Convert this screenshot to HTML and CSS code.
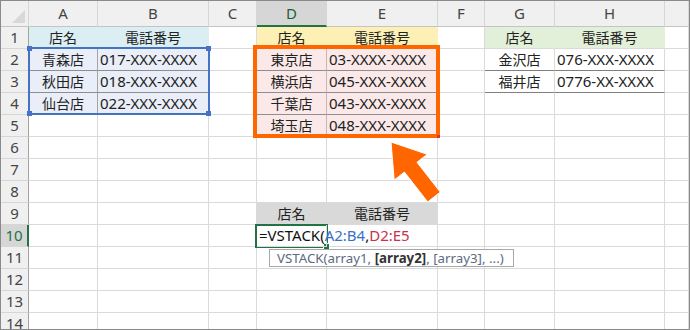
FILE: index.html
```html
<!DOCTYPE html>
<html lang="ja">

<head>
    <meta charset="UTF-8">
    <meta name="viewport" content="width=device-width, initial-scale=1.0">
    <title>VSTACK</title>
    <link rel="stylesheet" href="styles.css">
</head>

<body>
    <div class="sheet">
        <!-- 列見出し -->
        <div class="row head">
            <div class="corner"><span class="tri"></span></div>
            <div class="ch">A</div>
            <div class="ch">B</div>
            <div class="ch">C</div>
            <div class="ch sel">D</div>
            <div class="ch">E</div>
            <div class="ch">F</div>
            <div class="ch">G</div>
            <div class="ch">H</div>
            <div class="ch"></div>
        </div>

        <div class="row">
            <div class="rh">1</div>
            <div class="c t1h mid">店名</div>
            <div class="c t1h mid">電話番号</div>
            <div class="c"></div>
            <div class="c t2h mid">店名</div>
            <div class="c t2h mid">電話番号</div>
            <div class="c"></div>
            <div class="c t3h mid">店名</div>
            <div class="c t3h mid">電話番号</div>
            <div class="c"></div>
        </div>
        <div class="row">
            <div class="rh">2</div>
            <div class="c t1 mid">青森店</div>
            <div class="c t1">017-XXX-XXXX</div>
            <div class="c"></div>
            <div class="c t2 mid">東京店</div>
            <div class="c t2">03-XXXX-XXXX</div>
            <div class="c"></div>
            <div class="c t3 mid">金沢店</div>
            <div class="c t3">076-XXX-XXXX</div>
            <div class="c"></div>
        </div>
        <div class="row">
            <div class="rh">3</div>
            <div class="c t1 mid">秋田店</div>
            <div class="c t1">018-XXX-XXXX</div>
            <div class="c"></div>
            <div class="c t2 mid">横浜店</div>
            <div class="c t2">045-XXX-XXXX</div>
            <div class="c"></div>
            <div class="c t3 mid">福井店</div>
            <div class="c t3">0776-XX-XXXX</div>
            <div class="c"></div>
        </div>
        <div class="row">
            <div class="rh">4</div>
            <div class="c t1 mid">仙台店</div>
            <div class="c t1">022-XXX-XXXX</div>
            <div class="c"></div>
            <div class="c t2 mid">千葉店</div>
            <div class="c t2">043-XXX-XXXX</div>
            <div class="c"></div>
            <div class="c"></div>
            <div class="c"></div>
            <div class="c"></div>
        </div>
        <div class="row">
            <div class="rh">5</div>
            <div class="c"></div>
            <div class="c"></div>
            <div class="c"></div>
            <div class="c t2 mid">埼玉店</div>
            <div class="c t2">048-XXX-XXXX</div>
            <div class="c"></div>
            <div class="c"></div>
            <div class="c"></div>
            <div class="c"></div>
        </div>
        <div class="row">
            <div class="rh">6</div>
            <div class="c"></div><div class="c"></div><div class="c"></div><div class="c"></div><div class="c"></div>
            <div class="c"></div><div class="c"></div><div class="c"></div><div class="c"></div>
        </div>
        <div class="row">
            <div class="rh">7</div>
            <div class="c"></div><div class="c"></div><div class="c"></div><div class="c"></div><div class="c"></div>
            <div class="c"></div><div class="c"></div><div class="c"></div><div class="c"></div>
        </div>
        <div class="row">
            <div class="rh">8</div>
            <div class="c"></div><div class="c"></div><div class="c"></div><div class="c"></div><div class="c"></div>
            <div class="c"></div><div class="c"></div><div class="c"></div><div class="c"></div>
        </div>
        <div class="row">
            <div class="rh">9</div>
            <div class="c"></div>
            <div class="c"></div>
            <div class="c"></div>
            <div class="c spill mid">店名</div>
            <div class="c spill mid">電話番号</div>
            <div class="c"></div>
            <div class="c"></div>
            <div class="c"></div>
            <div class="c"></div>
        </div>
        <div class="row">
            <div class="rh sel">10</div>
            <div class="c"></div>
            <div class="c"></div>
            <div class="c"></div>
            <div class="c formula">=VSTACK(<span class="ref1">A2:B4</span>,<span class="ref2">D2:E5</span><span class="caret"></span></div>
            <div class="c"></div>
            <div class="c"></div>
            <div class="c"></div>
            <div class="c"></div>
            <div class="c"></div>
        </div>
        <div class="row">
            <div class="rh">11</div>
            <div class="c"></div><div class="c"></div><div class="c"></div><div class="c"></div><div class="c"></div>
            <div class="c"></div><div class="c"></div><div class="c"></div><div class="c"></div>
        </div>
        <div class="row">
            <div class="rh">12</div>
            <div class="c"></div><div class="c"></div><div class="c"></div><div class="c"></div><div class="c"></div>
            <div class="c"></div><div class="c"></div><div class="c"></div><div class="c"></div>
        </div>
        <div class="row">
            <div class="rh">13</div>
            <div class="c"></div><div class="c"></div><div class="c"></div><div class="c"></div><div class="c"></div>
            <div class="c"></div><div class="c"></div><div class="c"></div><div class="c"></div>
        </div>
        <div class="row">
            <div class="rh">14</div>
            <div class="c"></div><div class="c"></div><div class="c"></div><div class="c"></div><div class="c"></div>
            <div class="c"></div><div class="c"></div><div class="c"></div><div class="c"></div>
        </div>

        <!-- 参照範囲の枠 -->
        <div class="ref-box">
            <span class="knob k1"></span>
            <span class="knob k2"></span>
            <span class="knob k3"></span>
            <span class="knob k4"></span>
        </div>
        <div class="orange-box"><span class="red-knob"></span></div>
        <div class="active-cell"><span class="fill-knob"></span></div>

        <svg class="arrow" width="690" height="330" viewBox="0 0 690 330">
            <polygon points="391,142 427.3,154.3 417,162.3 440.3,192.1 427.7,201.9 404.4,172.1 394.2,180.1"
                fill="#ff6600" stroke="#ffffff" stroke-width="1" stroke-linejoin="round" />
        </svg>

        <div class="tip">VSTACK(array1, <b>[array2]</b>, [array3], ...)</div>
    </div>
</body>

</html>
```

FILE: styles.css
```css
/* シート全体 */
body {
    margin: 0;
    background: #fff;
    font-family: "Noto Sans", "Noto Sans CJK JP", sans-serif;
    font-size: 15px;
    color: #222;
}

.sheet {
    position: relative;
    width: 690px;
    height: 330px;
    box-sizing: border-box;
    border: 1px solid #8a8a8a;
    overflow: hidden;
    background: #fff;
}

.row {
    display: grid;
    grid-template-columns: 28px 69px 111px 48px 70px 111px 47px 70px 110px 1fr;
    height: 22px;
}

.row.head {
    height: 26px;
}

.row > div {
    box-sizing: border-box;
    border-right: 1px solid #dadada;
    border-bottom: 1px solid #dadada;
    display: flex;
    align-items: center;
    white-space: nowrap;
    line-height: 1;
}

/* 見出し */
.head > div {
    background: #f0f0f0;
    border-right-color: #d6d6d6;
    border-bottom-color: #c4c4c4;
    justify-content: center;
    color: #444;
}

.corner {
    position: relative;
}

.corner .tri {
    position: absolute;
    right: 3px;
    bottom: 3px;
    width: 0;
    height: 0;
    border-left: 13px solid transparent;
    border-bottom: 13px solid #d8d8d8;
}

.head .ch.sel {
    background: #d6d6d6;
    border-bottom: 2px solid #217346;
    color: #1d5e39;
}

.row .rh {
    background: #f0f0f0;
    border-right-color: #a3a3a3;
    border-bottom-color: #d6d6d6;
    justify-content: center;
    color: #444;
}

.row .rh.sel {
    background: #d6d6d6;
    border-right: 2px solid #217346;
    color: #217346;
}

/* セル */
.row .c {
    padding-left: 2px;
}

.row .mid {
    justify-content: center;
    padding-left: 0;
    font-size: 14px;
}

.row .t1h {
    background: #daeef3;
    border-right-color: #daeef3;
}

.row .t1 {
    background: #e9eef8;
    border-bottom-color: #8e8e8e;
    border-right-color: #a4a4a4;
}

.row .t2h {
    background: #fcf0b4;
    border-right-color: #fcf0b4;
}

.row .t2 {
    background: #fbe9e9;
    border-bottom-color: #8e8e8e;
    border-right-color: #c7b6b6;
}

.row .t3h {
    background: #e2efd9;
    border-right-color: #e2efd9;
}

.row .t3 {
    border-bottom-color: #7f7f7f;
}

.row .spill {
    background: #d9d9d9;
    border-right-color: #d9d9d9;
}

.row .formula {
    position: relative;
    z-index: 3;
    overflow: visible;
    padding-left: 2px;
    color: #111;
}

.ref1 {
    color: #3a6fc6;
}

.ref2 {
    color: #c8324c;
}

.caret {
    display: inline-block;
    width: 1px;
    height: 17px;
    margin-left: 2px;
    background: #000;
}

/* 重ねる枠 */
.ref-box {
    position: absolute;
    left: 27px;
    top: 46px;
    width: 182px;
    height: 68px;
    box-sizing: border-box;
    border: 2px solid #4472c4;
}

.knob {
    position: absolute;
    width: 5px;
    height: 5px;
    background: #4472c4;
}

.k1 { left: -3px; top: -3px; }
.k2 { right: -3px; top: -3px; }
.k3 { left: -3px; bottom: -3px; }
.k4 { right: -3px; bottom: -3px; }

.orange-box {
    position: absolute;
    left: 252px;
    top: 44px;
    width: 187px;
    height: 93px;
    box-sizing: border-box;
    border: 4px solid #ff6600;
}

.red-knob {
    position: absolute;
    right: -4px;
    bottom: -4px;
    width: 3px;
    height: 3px;
    background: #d8323c;
}

.active-cell {
    position: absolute;
    left: 254px;
    top: 223px;
    width: 73px;
    height: 24px;
    box-sizing: border-box;
    border: 2px solid #217346;
    z-index: 2;
}

.fill-knob {
    position: absolute;
    right: -4px;
    bottom: -4px;
    width: 5px;
    height: 5px;
    background: #217346;
    border: 1px solid #fff;
}

.arrow {
    position: absolute;
    left: -1px;
    top: -1px;
    z-index: 4;
}

.tip {
    position: absolute;
    left: 268px;
    top: 248px;
    height: 18px;
    box-sizing: border-box;
    padding: 0 9px 0 7px;
    border: 1px solid #a8a8a8;
    background: #fff;
    color: #5d6b82;
    font-size: 13.3px;
    line-height: 16px;
    white-space: nowrap;
    z-index: 5;
}

.tip b {
    color: #333;
}
```
